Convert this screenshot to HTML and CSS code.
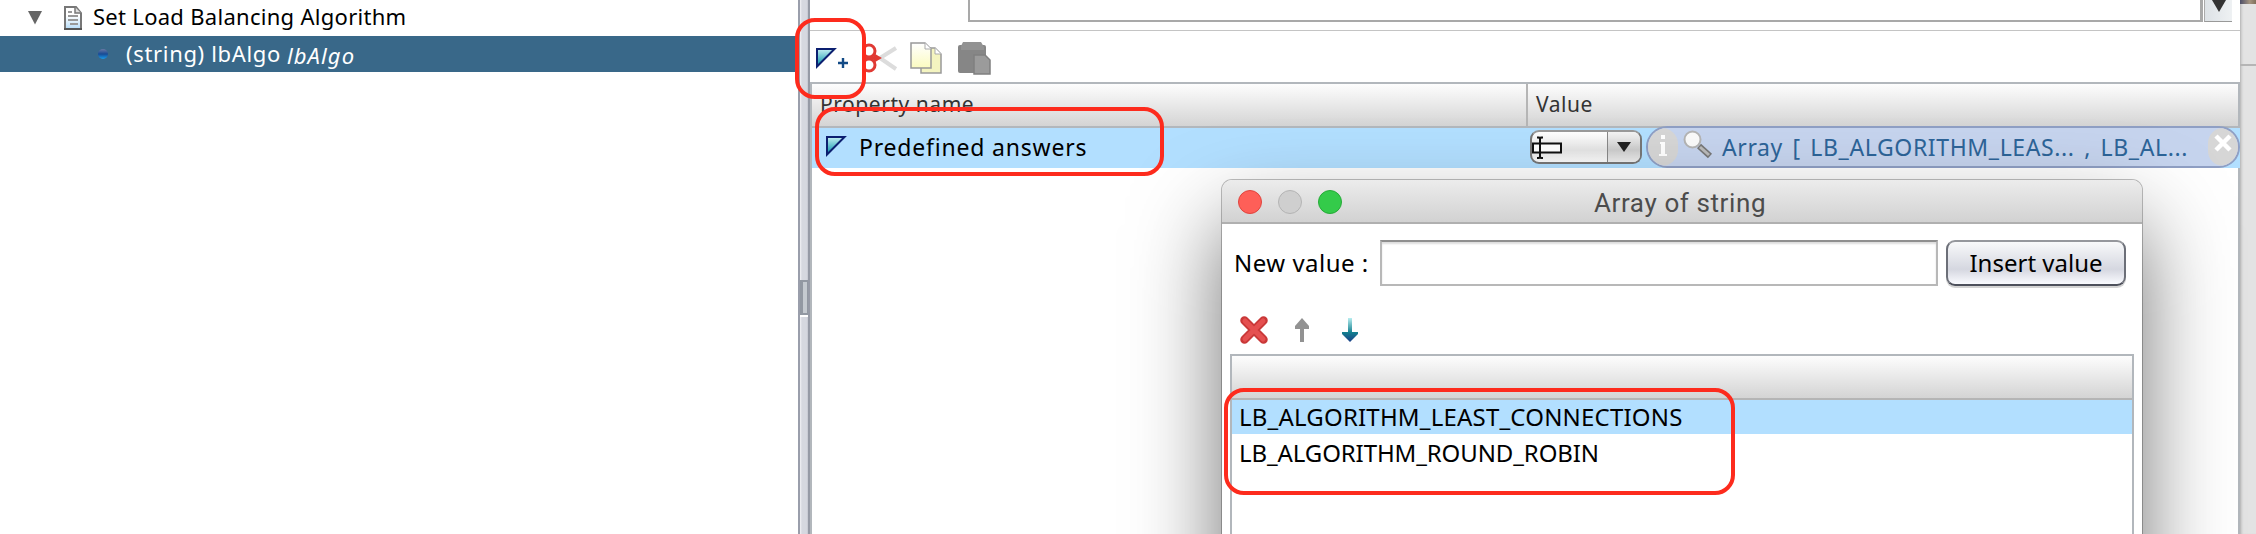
FILE: index.html
```
<!DOCTYPE html>
<html lang="en">
<head>
<meta charset="utf-8">
<title>Array of string</title>
<link rel="stylesheet" href="styles.css">
</head>
<body>
<div class="app">
  <aside class="tree">
    <div class="tree-row">
      <svg class="twisty" width="14" height="14" viewBox="0 0 14 14"><path d="M0 0H14L7 13.500Z" fill="#666"/></svg>
      <svg class="doc" width="18" height="24" viewBox="0 0 18 24"><defs><linearGradient id="dg" x2="0" y2="1"><stop offset=".4" stop-color="#fff"/><stop offset="1" stop-color="#b5dcf8"/></linearGradient></defs><path d="M1 1H12L17 7V23H1Z" fill="url(#dg)" stroke="#777" stroke-width="2"/><path d="M0 23H18" stroke="#555" stroke-width="2"/><path d="M11 1V7H17" fill="#ddd" stroke="#777" stroke-width="1.500"/><path d="M4 6H8M4 10H14M4 14H14M6 18H14" stroke="#999" stroke-width="1.800"/></svg>
      <span class="t-title">Set Load Balancing Algorithm</span>
    </div>
    <div class="tree-row selected">
      <svg class="dot" width="10" height="10" viewBox="0 0 10 10"><defs><linearGradient id="bg" x2="0" y2="1"><stop offset="0" stop-color="#6a78a5"/><stop offset=".5" stop-color="#184a94"/><stop offset="1" stop-color="#189cec"/></linearGradient></defs><circle cx="5" cy="5" r="5" fill="url(#bg)"/></svg>
      <span class="t-type">(string) lbAlgo</span><em class="t-name">lbAlgo</em>
    </div>
  </aside>
  <div class="splitter"><div class="grip"></div></div>
  <main class="main">
    <div class="top"><div class="textbox"></div><div class="scroll"><svg width="14" height="12" viewBox="0 0 14 12"><path d="M0 0H14L7 12Z" fill="#333"/></svg></div></div>
    <div class="toolbar">
      <svg class="i-add" width="34" height="22" viewBox="0 0 34 22"><defs><linearGradient id="tg" x2="0" y2="1"><stop offset="0" stop-color="#c4f0f2"/><stop offset="1" stop-color="#0090a8"/></linearGradient></defs><path d="M1 1H18.500L1 18.500Z" fill="url(#tg)" stroke="#0c1f70" stroke-width="2"/><path d="M22 15H32M27 10V20" stroke="#124a86" stroke-width="2.400"/></svg>
      <svg class="i-cut" width="34" height="32" viewBox="0 0 34 32"><g stroke="#dcdcdc" stroke-width="4" fill="none"><path d="M16 16L32 6M16 16L32 27"/></g><g stroke="#e03a34" stroke-width="3" fill="none"><ellipse cx="5" cy="9" rx="6" ry="6"/><ellipse cx="5" cy="23" rx="6" ry="6"/><path d="M2 16H14M10 13L15 16L10 19"/></g></svg>
      <svg class="i-copy" width="32" height="32" viewBox="0 0 32 32"><defs><linearGradient id="pg" x2="0" y2="1"><stop offset="0" stop-color="#fff"/><stop offset="1" stop-color="#fbfbc0"/></linearGradient></defs><path d="M11 6H25L31 12V31H11Z" fill="#f4f4c0" stroke="#999" stroke-width="1.500"/><path d="M25 6V12H31" fill="#fff" stroke="#aaa"/><path d="M1 1H15L21 7V26H1Z" fill="url(#pg)" stroke="#999" stroke-width="1.500"/><path d="M15 1V7H21" fill="#fff" stroke="#aaa"/></svg>
      <svg class="i-paste" width="34" height="34" viewBox="0 0 34 34"><rect y="3" width="28" height="28" rx="2" fill="#868686"/><path d="M5 0H23L26 5V8H3V4Z" fill="#929292"/><path d="M16 13H27L32 18V32H16Z" fill="#9b9b9b" stroke="#808080" stroke-width="1.500"/></svg>
    </div>
    <div class="thead"><div class="th name"><span class="t-prop">Property name</span></div><div class="th"><span class="t-value">Value</span></div></div>
    <div class="trow">
      <div class="cell-name">
        <svg width="21" height="21" viewBox="0 0 21 21"><path d="M1 1H18.500L1 18.500Z" fill="url(#tg)" stroke="#0c1f70" stroke-width="2"/></svg>
        <span class="t-pred">Predefined answers</span>
      </div>
      <div class="combo"><svg class="caret" width="32" height="24" viewBox="0 0 32 24"><path d="M1 7.500H29V16.500H1Z" fill="#fff" stroke="#111" stroke-width="2"/><path d="M5 1.500H7L8 3L9 1.500H11M8 2V21M5 22H7L8 21L9 22H11" fill="none" stroke="#111" stroke-width="2"/></svg><div class="combo-btn"><svg width="14" height="10" viewBox="0 0 14 10"><path d="M0 0H14L7 10Z" fill="#222"/></svg></div></div>
      <div class="pill">
        <div class="cap info"><svg width="8" height="24" viewBox="0 0 8 24"><path d="M2 1H6V5H2ZM1 8H6V20H8V22H0V20H2V10H1Z" fill="#fff"/></svg></div>
        <svg class="lens" width="30" height="30" viewBox="0 0 30 30"><path d="M16 16L27 26" stroke="#777" stroke-width="6"/><path d="M17 17L26 25" stroke="#bbb" stroke-width="3"/><circle cx="9.500" cy="9.500" r="8" fill="#fafafa" stroke="#b4b4b4" stroke-width="2"/></svg>
        <span class="t-arr">Array [ LB_ALGORITHM_LEAS... , LB_AL...</span>
        <div class="cap close"><svg width="18" height="18" viewBox="0 0 18 18"><path d="M2 2L16 16M16 2L2 16" stroke="#fff" stroke-width="4.500"/></svg></div>
      </div>
    </div>
    <div class="tbody"></div>
  </main>
  <div class="edge"><div class="edge-img"></div><div class="edge-top"></div></div>

  <section class="dialog">
    <header class="titlebar"><i class="light red"></i><i class="light grey"></i><i class="light green"></i><div class="title">Array of string</div></header>
    <div class="form"><label class="lab">New value :</label><div class="input"></div><button class="btn">Insert value</button></div>
    <div class="tools">
      <svg width="28" height="28" viewBox="0 0 28 28"><path d="M4.500 4.500L23.500 23.500M23.500 4.500L4.500 23.500" stroke="#c93838" stroke-width="8.500" stroke-linecap="round"/><path d="M5 5L23 23M23 5L5 23" stroke="#e55050" stroke-width="5" stroke-linecap="round"/></svg>
      <svg width="16" height="24" viewBox="0 0 16 24"><path d="M8 0L15 8V11H10V24H6V11H1V8Z" fill="#929292"/></svg>
      <svg width="16" height="24" viewBox="0 0 16 24"><defs><linearGradient id="ag" x2="0" y2="1"><stop offset="0" stop-color="#b8eef0"/><stop offset=".6" stop-color="#148090"/><stop offset="1" stop-color="#1c3f88"/></linearGradient></defs><path d="M6 0H10V14H16V16L8 24L0 16V14H6Z" fill="url(#ag)"/></svg>
    </div>
    <div class="list"><div class="lhead"></div><div class="lrow sel">LB_ALGORITHM_LEAST_CONNECTIONS</div><div class="lrow second">LB_ALGORITHM_ROUND_ROBIN</div></div>
  </section>
  <div class="mark m1"></div><div class="mark m2"></div><div class="mark m3"></div>
</div>
</body>
</html>
```
FILE: styles.css
```
* { box-sizing: border-box; }
body { margin: 0; font-family: "Noto Sans", "Open Sans", sans-serif; background: #fff; color: #000; }
svg { display: block; flex: none; }
.app { position: relative; display: flex; width: 2256px; height: 534px; overflow: hidden; white-space: nowrap; }
.tree { width: 798px; }
.tree-row { display: flex; align-items: center; height: 36px; font-size: 22px; line-height: 36px; }
.twisty { margin-left: 28px; }
.doc { margin-left: 22px; }
.t-title { margin: -4px 0 0 11px; letter-spacing: .29px; }
.selected { background: #396889; color: #fff; }
.dot { margin-left: 98px; }
.t-type { margin: -2px 0 0 18px; letter-spacing: .66px; }
.t-name { margin: 2px 0 0 6px; letter-spacing: 1.1px; }
.splitter { width: 12px; border-left: 2px solid #9a9eab; border-right: 2px solid #969aa6; background: linear-gradient(90deg, #f2f2f6, #d6d8e0 25%, #d6d8e0 80%, #c4c6d0); padding-top: 280px; }
.grip { height: 35px; border: 2px solid #9298a2; border-left-width: 3px; border-right-width: 1px; background: #c5cad0; box-shadow: 0 2px #fff; }
.main { width: 1430px; display: flex; flex-direction: column; }
.top { height: 31px; display: flex; border-bottom: 1px solid #c4c4c4; padding-left: 158px; }
.textbox { width: 1235px; height: 22px; border: solid #a9a9a9; border-width: 0 3px 2px 2px; }
.scroll { width: 28px; height: 22px; margin-left: 1px; padding-left: 7px; background: linear-gradient(90deg, #dde2e6, #eef1f3); border-left: 1px solid #aaa; border-bottom: 1px solid #999; }
.toolbar { height: 51px; display: flex; align-items: flex-start; padding-left: 6px; }
.i-add { margin-top: 17px; }
.i-cut { margin: 11px 0 0 14px; }
.i-copy { margin: 11px 0 0 12px; }
.i-paste { margin: 11px 0 0 16px; }
.thead { height: 46px; display: flex; border: 2px solid #b2b7bc; background: linear-gradient(#fdfdfd, #d4d4d4); color: #333; font-size: 21px; line-height: 40px; letter-spacing: .55px; }
.th { padding-left: 8px; }
.th.name { width: 716px; border-right: 2px solid #b5b5b5; }
.trow { height: 40px; display: flex; border-left: 2px solid #b2b7bc; background: #b2dfff; font-size: 23px; line-height: 38px; }
.cell-name { width: 718px; display: flex; padding-left: 14px; align-items: flex-start; }
.cell-name svg { margin-top: 8px; }
.t-pred { margin-left: 12px; letter-spacing: .8px; }
.combo { width: 112px; height: 34px; margin-top: 2px; border: 2px solid #777; border-top-color: #999; border-radius: 9px; background: linear-gradient(#fff, #e4e4e4 60%, #fafafa); display: flex; justify-content: space-between; overflow: hidden; }
.caret { margin-top: 4px; }
.combo-btn { width: 33px; border-left: 1px solid #888; background: linear-gradient(#f4f4f4, #ccc 60%, #eee); display: flex; align-items: center; justify-content: center; }
.pill { width: 594px; height: 42px; margin: -2px 0 0 4px; border: 2px solid #8f9fc4; border-radius: 21px; background: #c6d4ee; color: #2d6498; display: flex; overflow: hidden; position: relative; line-height: 38px; }
.cap { width: 30px; height: 38px; background: #d6d6d6; display: flex; justify-content: center; }
.info { border-radius: 14px 16px 16px 14px; padding-top: 6px; }
.close { margin-left: auto; border-radius: 16px; padding-top: 6px; }
.lens { margin: 2px 0 0 5px; }
.t-arr { margin: 0 0 0 9px; letter-spacing: .62px; word-spacing: 3px; }
.tbody { flex: 1; border: solid #b2b7bc; border-width: 0 2px; }
.edge { width: 16px; background: #e3e3e3; box-shadow: inset 3px 0 3px -2px #aaa; }
.edge-img { height: 4px; background: linear-gradient(90deg, #4d4f68, #a49480 60%, #806f5a); }
.edge-top { height: 62px; border-bottom: 2px solid #b5b5b5; }
.dialog { position: absolute; left: 1222px; top: 180px; width: 920px; height: 480px; border-radius: 10px; background: #fff; box-shadow: 0 0 0 1px rgba(0,0,0,.25), 0 44px 88px rgba(0,0,0,.56); }
.titlebar { height: 44px; display: flex; align-items: center; padding: 0 16px; border-bottom: 2px solid #b0b0b0; border-radius: 10px 10px 0 0; background: linear-gradient(#ececec, #d2d2d2); }
.light { width: 24px; height: 24px; border-radius: 50%; margin: 1px 16px 0 0; border: 1px solid #e0443e; background: #fe5f58; }
.light.grey { background: #cfcfcf; border-color: #b4b4b4; }
.light.green { background: #34cb4a; border-color: #26ab38; }
.title { margin: 3px 0 0 236px; font: 26px/42px Roboto, sans-serif; letter-spacing: .6px; color: #4c4c4c; }
.form { display: flex; padding: 16px 0 0 12px; font-size: 24px; line-height: 46px; }
.lab { width: 146px; letter-spacing: .5px; }
.input { width: 558px; height: 46px; border: 2px solid #b8b8b8; border-top-color: #8f8f8f; box-shadow: inset 0 2px 2px #ddd; }
.btn { width: 180px; height: 46px; margin-left: 8px; padding: 0; border: 2px solid; border-color: #95979c #6c6f78 #4e515c; border-radius: 9px; background: linear-gradient(#f8f9fa, #d5d7e0 65%, #fafbff); box-shadow: 0 2px #d4d4d4; font: inherit; line-height: 42px; color: #000; }
.tools { height: 68px; display: flex; padding: 30px 0 0 18px; }
.tools svg:nth-child(2) { margin: 2px 0 0 26px; }
.tools svg:nth-child(3) { margin: 2px 0 0 32px; }
.list { margin-left: 8px; width: 904px; height: 300px; border: 2px solid #b2b7bc; font-size: 24px; }
.lhead { height: 44px; border-bottom: 2px solid #b5b5b5; background: linear-gradient(#fdfdfd, #d4d4d4); }
.lrow { height: 36px; padding-left: 7px; line-height: 34px; letter-spacing: .2px; }
.lrow.sel { height: 34px; background: #b2dfff; }
.lrow.second { line-height: 38px; letter-spacing: -.1px; }
.mark { position: absolute; border: 4px solid #fd2b1d; border-radius: 20px; }
.m1 { left: 795px; top: 18px; width: 71px; height: 81px; }
.m2 { left: 815px; top: 107px; width: 349px; height: 69px; }
.m3 { left: 1224px; top: 388px; width: 511px; height: 107px; }
```
